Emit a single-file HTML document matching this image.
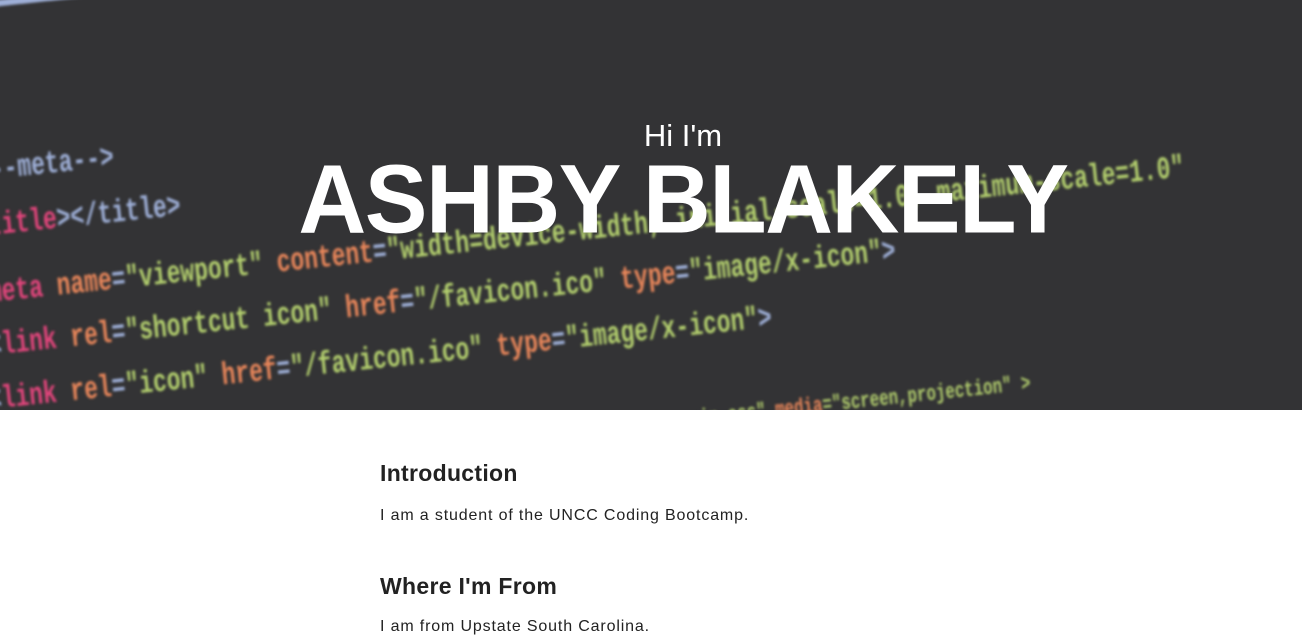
<!DOCTYPE html>
<html><head><meta charset="utf-8"><style>
*{margin:0;padding:0;box-sizing:border-box}
body{width:1302px;height:624px;overflow:hidden;background:#fff;font-family:"Liberation Sans",sans-serif}
.hero{position:relative;width:1302px;height:410px;background:#333335;overflow:hidden}
.code{position:absolute;left:-20px;top:0;font-family:"Liberation Mono",monospace;font-weight:bold;filter:blur(1.2px);white-space:pre;color:#a9c46a}
.l{position:absolute;font-size:32px;transform:rotate(-6deg) scaleX(0.72);transform-origin:0 50%}
.p{color:#e0457b}.o{color:#e8865a}.g{color:#b3cf6e}.b{color:#9fb0d8}
.hi{position:absolute;left:0;width:1366px;top:118px;text-align:center;color:#fff;font-size:31px}
.name{position:absolute;left:0;width:1366px;top:145px;text-align:center;color:#fff;font-weight:bold;font-size:94px;letter-spacing:-1.5px;transform:scaleY(1.04)}
.c{position:absolute;left:380px;top:460px;color:#222}
h2{font-size:23px;font-weight:bold;color:#222;letter-spacing:0.3px}
p{font-size:16px;letter-spacing:0.85px;margin-top:20px}
</style></head><body>
<div class="hero">
<div class="code">
<div class="l b" style="left:0;top:-14px">━━━━━━━━━━</div>
<div class="l p" style="left:0;top:95px">&gt;</div>
<div class="l b" style="left:10px;top:152px">--meta--&gt;</div>
<div class="l" style="left:8px;top:208px"><span class="p">title</span><span class="b">&gt;&lt;/title&gt;</span></div>
<div class="l" style="left:8px;top:275px"><span class="p">meta </span><span class="o">name</span><span class="b">=</span><span class="g">"viewport" </span><span class="o">content</span><span class="b">=</span><span class="g">"width=device-width, initial-scale=1.0, maximum-scale=1.0"</span></div>
<div class="l" style="left:8px;top:328px"><span class="b">&lt;</span><span class="p">link </span><span class="o">rel</span><span class="b">=</span><span class="g">"shortcut icon" </span><span class="o">href</span><span class="b">=</span><span class="g">"/favicon.ico" </span><span class="o">type</span><span class="b">=</span><span class="g">"image/x-icon"</span><span class="b">&gt;</span></div>
<div class="l" style="left:8px;top:382px"><span class="b">&lt;</span><span class="p">link </span><span class="o">rel</span><span class="b">=</span><span class="g">"icon" </span><span class="o">href</span><span class="b">=</span><span class="g">"/favicon.ico" </span><span class="o">type</span><span class="b">=</span><span class="g">"image/x-icon"</span><span class="b">&gt;</span></div>
<div class="l g" style="left:540px;top:425px;font-size:22px">="css/materialize.min.css" <span class="o">media</span>="screen,projection" &gt;</div>
</div>
<div class="hi">Hi I'm</div>
<div class="name">ASHBY BLAKELY</div>
</div>
<div class="c">
<h2>Introduction</h2>
<p>I am a student of the UNCC Coding Bootcamp.</p>
<h2 style="margin-top:48px">Where I'm From</h2>
<p style="margin-top:18px">I am from Upstate South Carolina.</p>
</div>
</body></html>
